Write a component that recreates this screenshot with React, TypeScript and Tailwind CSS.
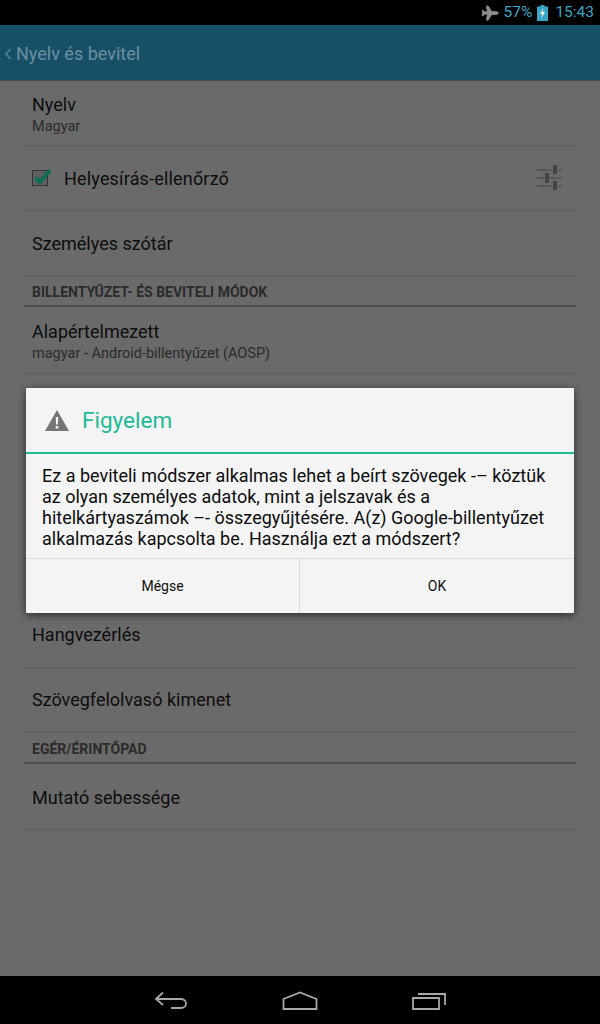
import { Plane } from 'lucide-react';

function Row({ title, sub, height = 'h-[65px]', offset = 'pt-[2px]' }: { title: string; sub?: string; height?: string; offset?: string }) {
  return (
    <div className={`${height} ${offset} mx-6 px-2 flex flex-col justify-center border-b border-[#5f5f5f]`}>
      <p className="text-[18px] leading-[24px] text-[#0d0d0d]">{title}</p>
      {sub && <p className="text-[14.5px] leading-[18px] mt-[1px] text-[#2b2b2b]">{sub}</p>}
    </div>
  );
}

function SectionHeader({ title, height }: { title: string; height: string }) {
  return (
    <div className={`${height} mx-6 px-2 flex items-end pb-[4px] border-b-2 border-[#4f4f4f]`}>
      <p className="text-[14px] leading-[18px] font-bold text-[#2b2b2b]">{title}</p>
    </div>
  );
}

function TunerIcon() {
  return (
    <svg width="28" height="28" viewBox="0 0 28 28" fill="none" aria-hidden="true">
      <g stroke="#4b4b4b" strokeWidth="1.5">
        <path d="M1 6h15M22 6h4M1 14h7M13 14h13M1 22h15M22 22h4" opacity="0.8" />
      </g>
      <g fill="#444444">
        <rect x="17" y="1" width="4" height="9" />
        <rect x="9" y="9" width="4" height="10" />
        <rect x="17" y="17" width="4" height="9" />
      </g>
    </svg>
  );
}

function BatteryIcon() {
  return (
    <svg width="11" height="16" viewBox="0 0 11 16" aria-hidden="true">
      <path d="M3.500 0h4v1.500H11V16H0V1.500h3.500z" fill="#3aa6c8" />
      <path d="M6.500 3 3 9h2.200L4.200 13.500 8 7H5.600z" fill="#f2f7f9" />
    </svg>
  );
}

export default function App() {
  return (
    <div className="relative w-[600px] h-[1024px] overflow-hidden flex flex-col bg-[#6a6a6a] font-['Roboto',sans-serif]">
      {/* Status bar */}
      <div className="h-[25px] bg-black flex items-center justify-end gap-[5px] pr-[6px]">
        <Plane size={18} className="text-[#8f8f8f] fill-[#8f8f8f] rotate-45 mr-[1px]" strokeWidth={1} />
        <span className="text-[15.5px] text-[#3aa6c8]">57%</span>
        <BatteryIcon />
        <span className="text-[15.5px] text-[#3aa6c8] ml-[2px]">15:43</span>
      </div>

      {/* Action bar */}
      <div className="h-[56px] bg-[#155067] border-b border-[#3f4f55] flex items-center gap-[4px] pl-[4px] pt-[2px]">
        <svg width="8" height="14" viewBox="0 0 8 14" fill="none" aria-hidden="true">
          <path d="M6.500 2 2 7l4.500 5" stroke="#4f7f92" strokeWidth="1.800" />
        </svg>
        <span className="text-[18px] text-[#6c8f9d]">Nyelv és bevitel</span>
      </div>

      {/* Settings list */}
      <div className="flex-1 flex flex-col">
        <Row title="Nyelv" sub="Magyar" />
        <div className="h-[65px] mx-6 px-2 flex items-center border-b border-[#5f5f5f]">
          <div className="relative w-[16px] h-[16px] border border-[#333333] bg-[#5f5f5f] mr-[16px]">
            <svg className="absolute -top-[5px] -left-[1px]" width="22" height="22" viewBox="0 0 22 22" fill="none" aria-hidden="true">
              <path d="M3.500 11.500 8 16 18 4" stroke="#0f6b58" strokeWidth="4" />
            </svg>
          </div>
          <p className="flex-1 text-[18px] tracking-[0.18px] text-[#0d0d0d]">Helyesírás-ellenőrző</p>
          <div className="mr-[4px]">
            <TunerIcon />
          </div>
        </div>
        <Row title="Személyes szótár" />
        <SectionHeader title="BILLENTYŰZET- ÉS BEVITELI MÓDOK" height="h-[31px]" />
        <Row title="Alapértelmezett" sub="magyar - Android-billentyűzet (AOSP)" height="h-[67px]" />
        <div className="h-[229px]" />
        <Row title="Hangvezérlés" offset="pt-0" />
        <Row title="Szövegfelolvasó kimenet" offset="pt-0" />
        <SectionHeader title="EGÉR/ÉRINTŐPAD" height="h-[31px]" />
        <Row title="Mutató sebessége" height="h-[66px]" />
      </div>

      {/* Navigation bar */}
      <div className="h-[48px] bg-black flex items-center justify-center">
        <div className="w-[292px] flex items-center justify-between pt-[2px]">
          <svg width="34" height="20" viewBox="0 0 34 20" fill="none" aria-hidden="true">
            <path d="M9 1.500 2 8l7 6M2 8h25c3 0 5 2 5 4.500S30 17 27 17H17" stroke="#a8a8a8" strokeWidth="1.800" />
          </svg>
          <svg width="36" height="20" viewBox="0 0 36 20" fill="none" aria-hidden="true">
            <path d="M1.500 8 18 1.500 34.500 8v10h-33z" stroke="#a8a8a8" strokeWidth="1.800" />
          </svg>
          <svg width="34" height="20" viewBox="0 0 34 20" fill="none" aria-hidden="true">
            <path d="M1 7h26v11H1zM6 3h27v11" stroke="#a8a8a8" strokeWidth="1.800" />
          </svg>
        </div>
      </div>

      {/* Dialog */}
      <div className="absolute left-[26px] top-[388px] w-[548px] h-[225px] flex flex-col bg-[#f4f4f4] rounded-[1px] shadow-[0_2px_8px_rgba(0,0,0,0.6)]">
        <div className="h-[66px] shrink-0 flex items-center pl-[19px] pt-[2px] border-b-2 border-[#1dbb96]">
          <svg width="24" height="22" viewBox="0 0 24 22" aria-hidden="true">
            <path d="M12 0 24 21H0z" fill="#757575" />
            <path d="M10.700 7h2.600l-.4 7.500h-1.800zM10.700 16h2.600v2.600h-2.600z" fill="#f4f4f4" />
          </svg>
          <span className="ml-[13px] text-[22.5px] text-[#1dbb96]">Figyelem</span>
        </div>
        <p className="flex-1 px-[16px] pt-[11px] text-[18px] leading-[21px] text-[#0d0d0d]">
          Ez a beviteli módszer alkalmas lehet a beírt szövegek -– köztük az olyan személyes adatok, mint a jelszavak és a hitelkártyaszámok –- összegyűjtésére. A(z) Google-billentyűzet alkalmazás kapcsolta be. Használja ezt a módszert?
        </p>
        <div className="h-[55px] shrink-0 flex border-t border-[#dcdcdc]">
          <button className="w-[274px] text-[14px] text-[#111111] border-r border-[#dcdcdc]">Mégse</button>
          <button className="flex-1 text-[14px] text-[#111111]">OK</button>
        </div>
      </div>
    </div>
  );
}
